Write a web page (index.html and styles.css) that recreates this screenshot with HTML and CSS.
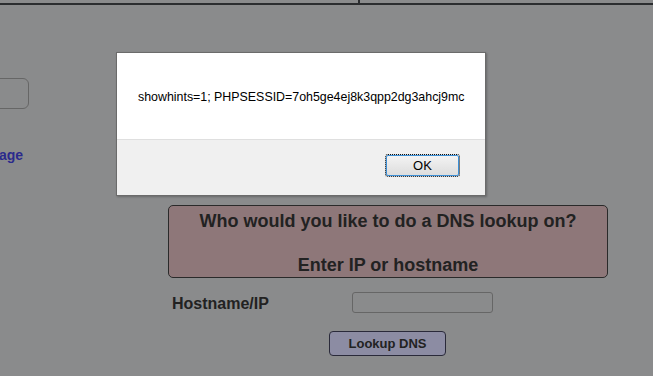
FILE: index.html
```html
<!DOCTYPE html>
<html lang="en">
<head>
  <meta charset="UTF-8">
  <title>DNS Lookup</title>
  <link rel="stylesheet" href="styles.css">
</head>
<body>
  <div class="topbar"><span class="tick"></span></div>
  <div class="page">
    <div class="side">
      <div class="side-input"></div>
      <a class="side-link" href="#">age</a>
    </div>
    <div class="main">
      <div class="question">
        <p>Who would you like to do a DNS lookup on?</p>
        <p>Enter IP or hostname</p>
      </div>
      <div class="form-row">
        <label class="form-label">Hostname/IP</label>
        <input class="form-input" type="text">
      </div>
      <div class="btn-row">
        <button class="lookup-btn">Lookup DNS</button>
      </div>
    </div>
  </div>

  <div class="dialog">
    <div class="dialog-body">showhints=1; PHPSESSID=7oh5ge4ej8k3qpp2dg3ahcj9mc</div>
    <div class="dialog-foot">
      <button class="ok-btn">OK</button>
    </div>
  </div>
</body>
</html>
```

FILE: styles.css
```css
body {
  margin: 0;
  background-color: #8a8b8c;
  font-family: Arial, "Liberation Sans", sans-serif;
  color: #222;
  height: 376px;
  overflow: hidden;
  position: relative;
}
.topbar {
  height: 3px;
  border-bottom: 2px solid #2b2d2f;
  position: relative;
}
.tick {
  position: absolute;
  left: 358px;
  top: 0;
  width: 2px;
  height: 3px;
  background-color: #2b2d2f;
}
.page {
  display: flex;
}
.side {
  width: 168px;
  padding-top: 73px;
}
.side-input {
  width: 36px;
  height: 29px;
  margin-left: -9px;
  border: 1px solid #666;
  border-radius: 6px;
}
.side-link {
  display: block;
  margin-top: 38px;
  font-weight: bold;
  font-size: 14px;
  color: #2b2a8c;
  text-decoration: none;
  margin-left: -1px;
}
.main {
  padding-top: 200px;
  width: 440px;
}
.question {
  background-color: #8e7779;
  border: 1px solid #2a2a2a;
  border-radius: 5px;
  height: 71px;
  text-align: center;
  font-weight: bold;
  font-size: 18px;
}
.question p {
  margin: 0;
  padding-top: 5px;
}
.question p + p {
  padding-top: 23px;
}
.form-row {
  display: flex;
  align-items: center;
  margin-top: 14px;
  padding-left: 4px;
}
.form-label {
  width: 180px;
  font-weight: bold;
  font-size: 16px;
  margin-top: 2px;
}
.form-input {
  width: 141px;
  height: 21px;
  box-sizing: border-box;
  padding: 0;
  border: 1px solid #666;
  border-radius: 3px;
  background: transparent;
}
.btn-row {
  margin-top: 18px;
  padding-left: 161px;
}
.lookup-btn {
  width: 117px;
  height: 25px;
  background-color: #8c8ca3;
  border: 1px solid #2a2a3a;
  border-radius: 4px;
  font-family: Arial, "Liberation Sans", sans-serif;
  font-weight: bold;
  font-size: 13px;
  color: #222;
}
.dialog {
  position: absolute;
  left: 116px;
  top: 52px;
  width: 368px;
  border: 1px solid #6b6b6b;
  box-shadow: 1px 1px 2px rgba(0, 0, 0, 0.25);
}
.dialog-body {
  background-color: #fff;
  height: 86px;
  line-height: 88px;
  padding-left: 21px;
  font-size: 12.4px;
  color: #000;
  border-bottom: 1px solid #dfdfdf;
}
.dialog-foot {
  background-color: #f0f0f0;
  height: 55px;
  position: relative;
}
.ok-btn {
  position: absolute;
  left: 268px;
  top: 14px;
  width: 75px;
  height: 23px;
  border: 1px dotted #111;
  outline: 1px solid #3c8fd6;
  outline-offset: -2px;
  border-radius: 3px;
  background: linear-gradient(#f4f4f4, #dcdcdc);
  font-family: Arial, "Liberation Sans", sans-serif;
  font-size: 13px;
  color: #000;
}
```
